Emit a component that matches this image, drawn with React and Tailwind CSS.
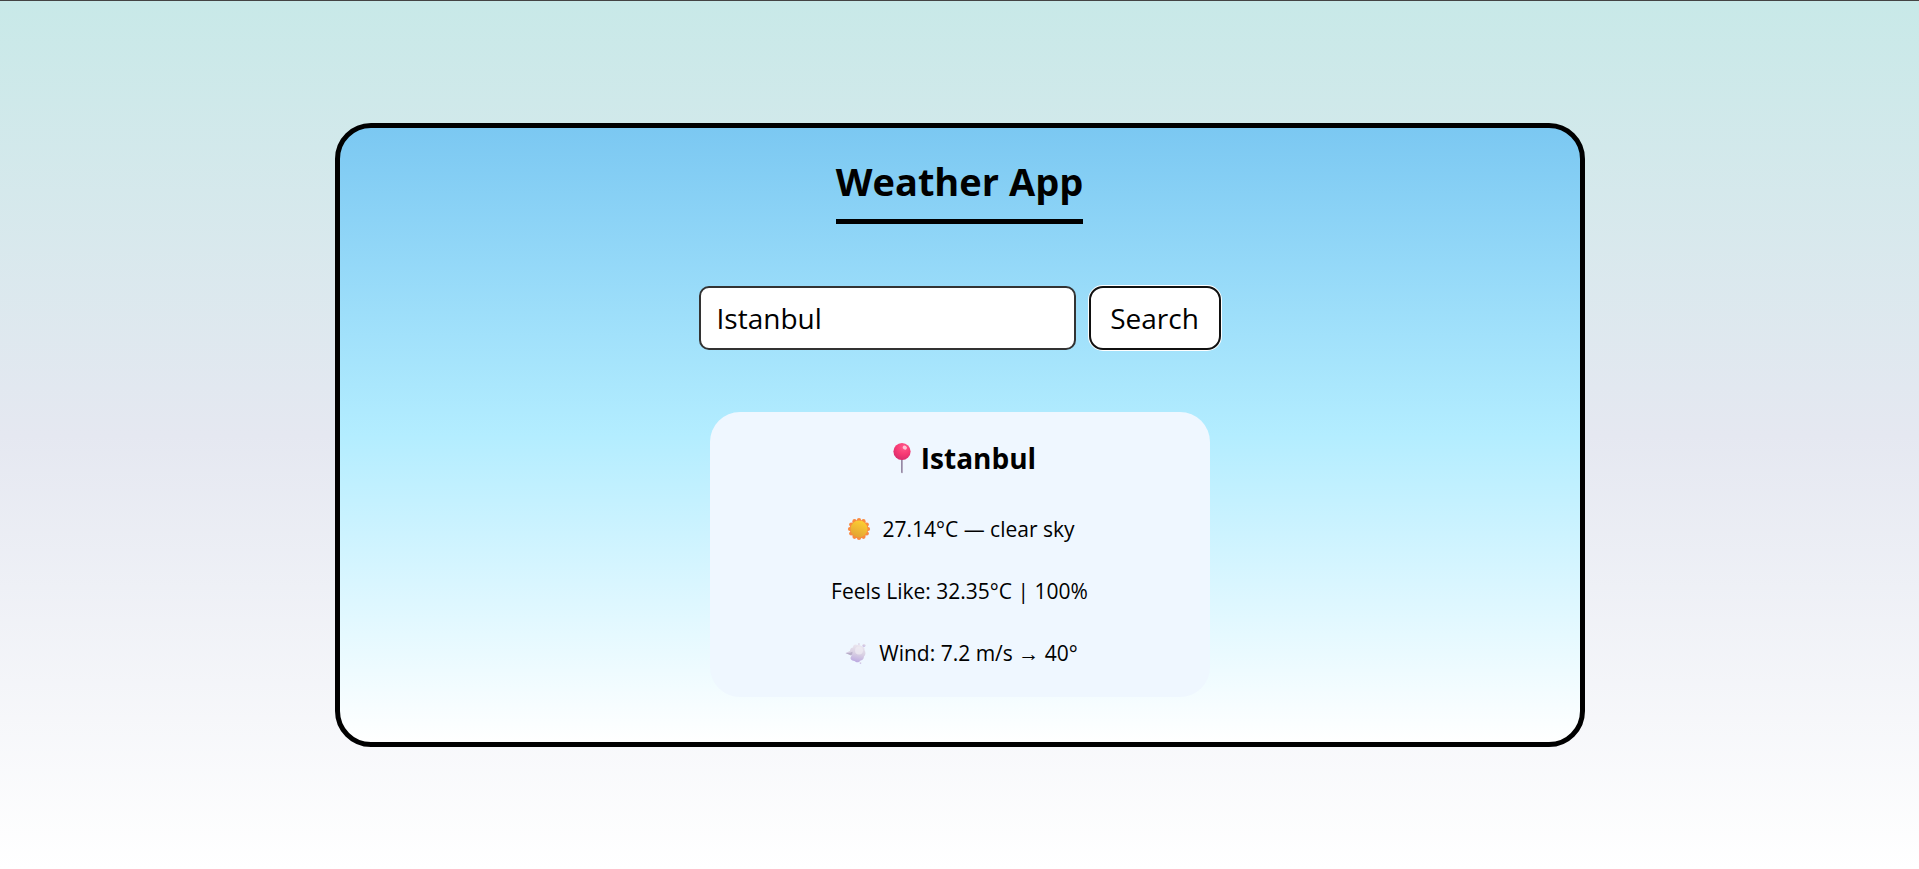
import { useState } from 'react';

function PinIcon() {
  return (
    <svg viewBox="-9 0 38 32" className="h-8 w-[38px]" aria-hidden="true">
      <defs>
        <radialGradient id="pin" cx="0.6" cy="0.25" r="0.8">
          <stop offset="0" stopColor="#ff5a8c" />
          <stop offset="0.5" stopColor="#f83b74" />
          <stop offset="1" stopColor="#d42a6b" />
        </radialGradient>
      </defs>
      <path d="M9 17h2v13.500a1 .8 0 0 1-2 0z" fill="#b3a9c0" />
      <path d="M9 17h1v13.500H9z" fill="#958aa5" />
      <circle cx="10" cy="9.500" r="8.600" fill="url(#pin)" />
      <ellipse cx="12.800" cy="5.600" rx="2.200" ry="1.900" fill="#ffc3d5" transform="rotate(30 12.8 5.6)" />
    </svg>
  );
}

function SunIcon() {
  const rays = Array.from({ length: 12 }, (_, i) => (i * Math.PI) / 6);
  return (
    <svg viewBox="-3 0 30 24" className="h-6 w-[30px]" aria-hidden="true">
      <defs>
        <linearGradient id="sun" x1="0.7" y1="0" x2="0.3" y2="1">
          <stop offset="0" stopColor="#fdd032" />
          <stop offset="1" stopColor="#e2a133" />
        </linearGradient>
      </defs>
      {rays.map((a) => (
        <circle key={a} cx={12 + 9 * Math.sin(a)} cy={12 - 9 * Math.cos(a)} r="2.100" fill="#f98a3f" />
      ))}
      <circle cx="12" cy="12" r="9.300" fill="#f98a3f" />
      <circle cx="12" cy="12" r="8.500" fill="url(#sun)" />
    </svg>
  );
}

function WindIcon() {
  return (
    <svg viewBox="-3 0 30 24" className="h-6 w-[30px]" aria-hidden="true">
      <defs>
        <linearGradient id="puff" x1="0.65" y1="0" x2="0.4" y2="1">
          <stop offset="0" stopColor="#ece8f0" />
          <stop offset="0.5" stopColor="#d9d0e3" />
          <stop offset="1" stopColor="#b9a5e0" />
        </linearGradient>
      </defs>
      <g fill="url(#puff)">
        <path d="M1.500 12 6 10C6 7.500 7.500 6.500 9 6.500 9 4 11 2.800 13 4c1.500-1 3.500-.500 4 1 2.500 0 4 2 3.500 4 1.500 2.500 1.200 5-.500 6.500 0 2.500-2 4-3.500 4-1 2-4 2.500-6 .500-2 0-3.500-1-4-2.500 0-1.500.500-2.500 1.500-3z" />
        <circle cx="15" cy="2.800" r="0.800" />
        <circle cx="20" cy="4.300" r="1.500" />
        <circle cx="16.500" cy="21.800" r="0.900" />
      </g>
      <path d="M1.500 12c3 .300 5 0 7-1.200 0 1.800-.500 3-1.500 3.800z" fill="#b9afc9" />
      <circle cx="15" cy="9.500" r="4" fill="#f0edf3" opacity="0.700" />
    </svg>
  );
}

export default function App() {
  const [city, setCity] = useState('Istanbul');
  return (
    <div className="flex min-h-screen flex-col items-center border-t border-[#444] bg-linear-to-b from-[#c8e9e8] via-[#e5e8f1] to-white bg-origin-border px-4 pt-[122px] font-[family-name:Open_Sans,sans-serif] text-black">
      <main className="flex w-full max-w-[1250px] flex-col items-center rounded-[36px] border-5 border-black bg-linear-to-b from-[#7bc8f2] via-[#b3edff] to-white px-4 pt-7 pb-[45px]">
        <h1 className="border-b-5 border-black pb-3 text-[38px]/[51px] font-bold">Weather App</h1>
        <form className="mt-[62px] flex max-w-full gap-[13px]" onSubmit={(e) => e.preventDefault()}>
          <input
            type="text"
            aria-label="City"
            value={city}
            onChange={(e) => setCity(e.target.value)}
            className="h-16 w-[377px] min-w-0 rounded-[10px] border-2 border-[#333] bg-white px-4 text-[28px] outline-none"
          />
          <button
            type="submit"
            className="h-16 w-[132px] rounded-[14px] border-2 border-[#111] bg-white text-[28px] ring-1 ring-white"
          >
            Search
          </button>
        </form>
        <section className="mt-[62px] flex w-full max-w-[500px] flex-col items-center rounded-[30px] bg-[#eff7ff] pt-[26px] pb-7 text-[21px]/8">
          <h2 className="flex items-center text-[28px]/10 font-bold">
            <PinIcon />
            Istanbul
          </h2>
          <p className="mt-[35px] flex items-center gap-2">
            <SunIcon />
            27.14°C — clear sky
          </p>
          <p className="mt-[30px]">Feels Like: 32.35°C | 100%</p>
          <p className="mt-[30px] flex items-center gap-2">
            <WindIcon />
            Wind: 7.2 m/s → 40°
          </p>
        </section>
      </main>
    </div>
  );
}
